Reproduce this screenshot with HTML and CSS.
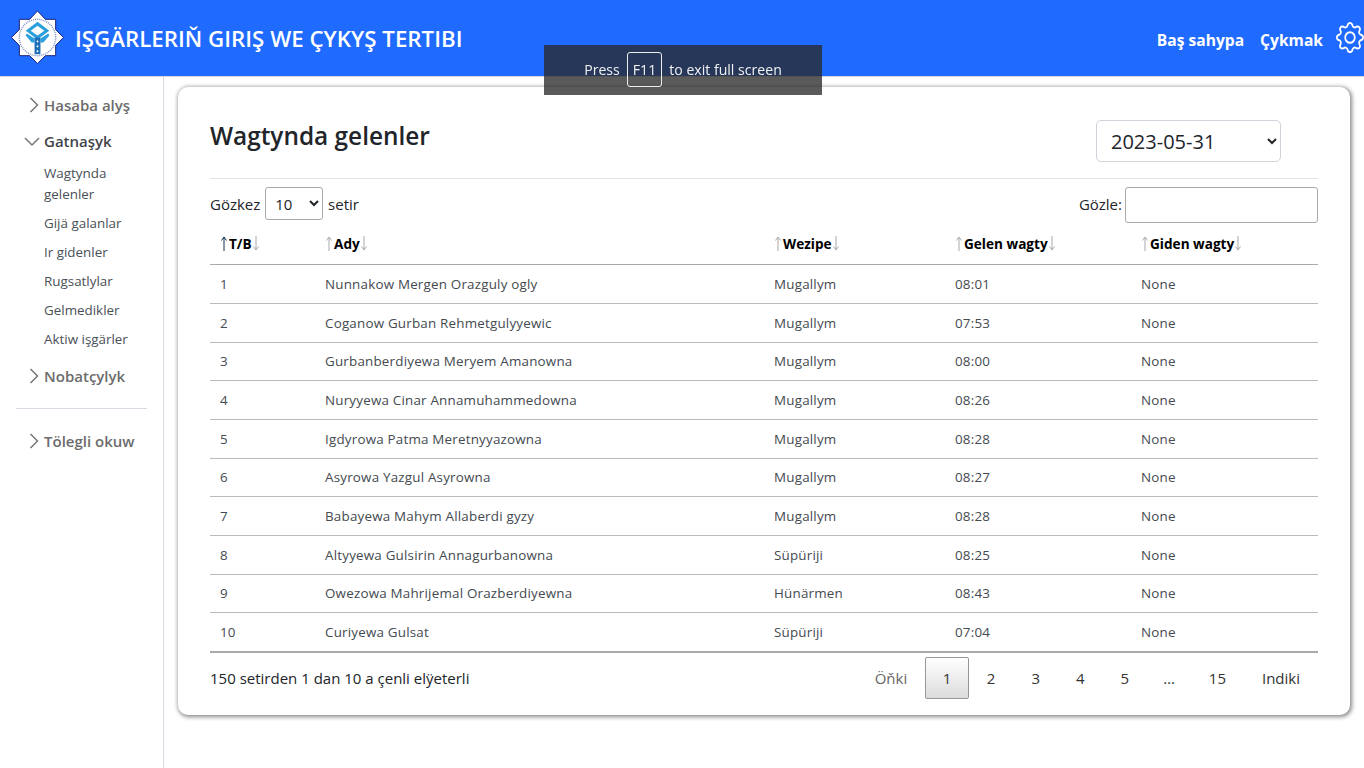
FILE: index.html
```html
<!DOCTYPE html>
<html lang="tk">
<head>
  <meta charset="UTF-8" />
  <title>Wagtynda gelenler</title>
  <link rel="stylesheet" href="styles.css">
</head>
<body>

  <!-- sort arrows used in the table head -->
  <svg class="sprite">
    <symbol id="up" viewBox="0 0 8 15"><path d="M4 15V1M1.500 4.500L4 1l2.500 3.500"/></symbol>
    <symbol id="down" viewBox="0 0 8 15"><path d="M4 0v14M1.500 10.500L4 14l2.500-3.500"/></symbol>
  </svg>

  <!-- TOP BAR -->
  <header class="topbar">
    <a class="brand" href="#">
      <svg class="brand-logo" viewBox="0 0 56 56">
        <path d="M28 1l8 8.500h10.500v10.500l8 8-8 8v10.500h-10.500l-8 8-8-8h-10.500v-10.500l-8-8 8-8v-10.500h10.500z" fill="#fff" stroke="#1b1f7a" stroke-width="1"/>
        <circle cx="28" cy="28" r="18.500" fill="none" stroke="#7f8fc0" stroke-width="1.500" stroke-dasharray="1 1"/>
        <path d="M28 12l12 9-12 9-12-9z" fill="#2a9fdc"/>
        <path d="M28 16l7 5-7 5-7-5z" fill="#fff"/>
        <path d="M17 24l8 5v4h-3l-6-7zM39 24l-8 5v4h3l6-7z" fill="#2a9fdc"/>
        <rect x="25" y="28" width="6" height="17" fill="#1c6fb8"/>
        <path d="M28 31v2M27 32h2M28 36v2M27 37h2M28 41v2M27 42h2" stroke="#fff" stroke-width="1"/>
      </svg>
      <span class="brand-title">IŞGÄRLERIŇ GIRIŞ WE ÇYKYŞ TERTIBI</span>
    </a>
    <nav class="topnav">
      <a href="#">Baş sahypa</a>
      <a href="#">Çykmak</a>
      <svg class="gear" viewBox="0 0 16 16" preserveAspectRatio="none" fill="#fff">
        <path d="M8 4.754a3.246 3.246 0 1 0 0 6.492 3.246 3.246 0 0 0 0-6.492zM5.754 8a2.246 2.246 0 1 1 4.492 0 2.246 2.246 0 0 1-4.492 0z"/>
        <path d="M9.796 1.343c-.527-1.79-3.065-1.79-3.592 0l-.094.319a.873.873 0 0 1-1.255.52l-.292-.16c-1.64-.892-3.433.902-2.54 2.541l.159.292a.873.873 0 0 1-.52 1.255l-.319.094c-1.79.527-1.79 3.065 0 3.592l.319.094a.873.873 0 0 1 .52 1.255l-.16.292c-.892 1.64.901 3.434 2.541 2.54l.292-.159a.873.873 0 0 1 1.255.52l.094.319c.527 1.79 3.065 1.79 3.592 0l.094-.319a.873.873 0 0 1 1.255-.52l.292.16c1.64.893 3.434-.902 2.54-2.541l-.159-.292a.873.873 0 0 1 .52-1.255l.319-.094c1.79-.527 1.79-3.065 0-3.592l-.319-.094a.873.873 0 0 1-.52-1.255l.16-.292c.893-1.64-.902-3.433-2.541-2.54l-.292.159a.873.873 0 0 1-1.255-.52l-.094-.319zm-2.633.283c.246-.835 1.428-.835 1.674 0l.094.319a1.873 1.873 0 0 0 2.693 1.115l.291-.16c.764-.415 1.6.42 1.184 1.185l-.159.292a1.873 1.873 0 0 0 1.116 2.692l.318.094c.835.246.835 1.428 0 1.674l-.319.094a1.873 1.873 0 0 0-1.115 2.693l.16.291c.415.764-.42 1.6-1.185 1.184l-.291-.159a1.873 1.873 0 0 0-2.693 1.116l-.094.318c-.246.835-1.428.835-1.674 0l-.094-.319a1.873 1.873 0 0 0-2.692-1.115l-.292.16c-.764.415-1.6-.42-1.184-1.185l.159-.291A1.873 1.873 0 0 0 1.945 8.93l-.319-.094c-.835-.246-.835-1.428 0-1.674l.319-.094A1.873 1.873 0 0 0 3.06 4.377l-.16-.292c-.415-.764.42-1.6 1.185-1.184l.292.159a1.873 1.873 0 0 0 2.692-1.115l.094-.319z"/>
      </svg>
    </nav>
  </header>

  <!-- Browser full screen hint -->
  <div class="fs-hint">Press <kbd>F11</kbd> to exit full screen</div>

  <div class="layout">

    <!-- SIDEBAR -->
    <aside class="sidebar">
      <a class="side-link" href="#">
        <svg class="chev" viewBox="0 0 16 16"><path d="M2.500 1l7 7-7 7"/></svg>Hasaba alyş
      </a>
      <a class="side-link open" href="#">
        <svg class="chev chev-down" viewBox="0 0 16 16"><path d="M1 5l7 7 7-7"/></svg>Gatnaşyk
      </a>
      <ul class="side-sub">
        <li><a href="#">Wagtynda gelenler</a></li>
        <li><a href="#">Gijä galanlar</a></li>
        <li><a href="#">Ir gidenler</a></li>
        <li><a href="#">Rugsatlylar</a></li>
        <li><a href="#">Gelmedikler</a></li>
        <li><a href="#">Aktiw işgärler</a></li>
      </ul>
      <a class="side-link" href="#">
        <svg class="chev" viewBox="0 0 16 16"><path d="M2.500 1l7 7-7 7"/></svg>Nobatçylyk
      </a>
      <hr class="side-line">
      <a class="side-link" href="#">
        <svg class="chev" viewBox="0 0 16 16"><path d="M2.500 1l7 7-7 7"/></svg>Tölegli okuw
      </a>
    </aside>

    <!-- CONTENT -->
    <main class="content">
      <section class="card">
        <div class="card-head">
          <h2>Wagtynda gelenler</h2>
          <select class="date-select">
            <option>2023-05-31</option>
          </select>
        </div>

        <div class="table-tools">
          <label class="length">Gözkez
            <select class="length-select"><option>10</option></select>
            setir</label>
          <label class="search"><span class="search-label">Gözle:</span><input type="text"></label>
        </div>

        <table class="data">
          <thead>
            <tr>
              <th class="col-id"><svg class="arr on"><use href="#up"/></svg>T/B<svg class="arr"><use href="#down"/></svg></th>
              <th class="col-name"><svg class="arr"><use href="#up"/></svg>Ady<svg class="arr"><use href="#down"/></svg></th>
              <th class="col-job"><svg class="arr"><use href="#up"/></svg>Wezipe<svg class="arr"><use href="#down"/></svg></th>
              <th class="col-in"><svg class="arr"><use href="#up"/></svg>Gelen wagty<svg class="arr"><use href="#down"/></svg></th>
              <th><svg class="arr"><use href="#up"/></svg>Giden wagty<svg class="arr"><use href="#down"/></svg></th>
            </tr>
          </thead>
          <tbody>
            <tr><td>1</td><td>Nunnakow Mergen Orazguly ogly</td><td>Mugallym</td><td>08:01</td><td>None</td></tr>
            <tr><td>2</td><td>Coganow Gurban Rehmetgulyyewic</td><td>Mugallym</td><td>07:53</td><td>None</td></tr>
            <tr><td>3</td><td>Gurbanberdiyewa Meryem Amanowna</td><td>Mugallym</td><td>08:00</td><td>None</td></tr>
            <tr><td>4</td><td>Nuryyewa Cinar Annamuhammedowna</td><td>Mugallym</td><td>08:26</td><td>None</td></tr>
            <tr><td>5</td><td>Igdyrowa Patma Meretnyyazowna</td><td>Mugallym</td><td>08:28</td><td>None</td></tr>
            <tr><td>6</td><td>Asyrowa Yazgul Asyrowna</td><td>Mugallym</td><td>08:27</td><td>None</td></tr>
            <tr><td>7</td><td>Babayewa Mahym Allaberdi gyzy</td><td>Mugallym</td><td>08:28</td><td>None</td></tr>
            <tr><td>8</td><td>Altyyewa Gulsirin Annagurbanowna</td><td>Süpüriji</td><td>08:25</td><td>None</td></tr>
            <tr><td>9</td><td>Owezowa Mahrijemal Orazberdiyewna</td><td>Hünärmen</td><td>08:43</td><td>None</td></tr>
            <tr><td>10</td><td>Curiyewa Gulsat</td><td>Süpüriji</td><td>07:04</td><td>None</td></tr>
          </tbody>
        </table>

        <div class="table-foot">
          <div>150 setirden 1 dan 10 a çenli elÿeterli</div>
          <div class="pager">
            <a class="page off" href="#">Öňki</a>
            <a class="page current" href="#">1</a>
            <a class="page" href="#">2</a>
            <a class="page" href="#">3</a>
            <a class="page" href="#">4</a>
            <a class="page" href="#">5</a>
            <span class="page dots">…</span>
            <a class="page" href="#">15</a>
            <a class="page" href="#">Indiki</a>
          </div>
        </div>
      </section>
    </main>
  </div>

</body>
</html>
```

FILE: styles.css
```css
* {
  box-sizing: border-box;
}

body {
  margin: 0;
  height: 100vh;
  overflow: hidden;
  font-family: "Open Sans", "Noto Sans", sans-serif;
  font-size: 15px;
  color: #212529;
  background: #fff;
}

a {
  color: inherit;
  text-decoration: none;
}

.sprite {
  display: none;
}

/* top bar */
.topbar {
  display: flex;
  justify-content: space-between;
  align-items: center;
  height: 77px;
  padding: 0 0 1px 10px;
  background: #1f6aff;
  border-bottom: 1px solid #d8d8d8;
}

.brand {
  display: flex;
  align-items: center;
  gap: 10px;
  color: #fff;
}

.brand-logo {
  width: 55px;
  height: 55px;
}

.brand-title {
  padding-top: 2px;
  font-size: 22.300px;
  font-weight: 600;
}

.topnav {
  display: flex;
  align-items: center;
  gap: 16px;
  color: #fff;
  font-size: 15.600px;
  font-weight: 700;
}

.topnav a {
  padding-top: 4px;
}

.gear {
  width: 28px;
  height: 31px;
  margin-left: -3px;
}

/* full screen hint */
.fs-hint {
  position: fixed;
  top: 45px;
  left: 544px;
  display: flex;
  align-items: center;
  justify-content: center;
  gap: 7px;
  width: 278px;
  height: 50px;
  padding-bottom: 2px;
  background: rgba(40, 40, 40, 0.77);
  color: #f1f1f1;
  font-size: 14.100px;
}

.fs-hint kbd {
  display: block;
  padding: 7px 5px;
  border: 1px solid #eee;
  border-radius: 3px;
  font: inherit;
}

/* layout */
.layout {
  display: flex;
  height: calc(100vh - 77px);
}

.sidebar {
  flex: 0 0 164px;
  padding: 16px 16px 0;
  border-right: 1px solid #d9d9e3;
}

.side-link {
  display: flex;
  align-items: center;
  height: 24px;
  margin-bottom: 12px;
  padding-left: 12px;
  color: #6c6c6c;
  font-size: 15px;
  font-weight: 600;
}

.side-link.open {
  color: #3f4448;
}

.chev {
  flex: none;
  width: 16px;
  height: 16px;
  fill: none;
  stroke: #777;
  stroke-width: 1.500;
}

.chev-down {
  margin-left: -4px;
  margin-right: 4px;
}

.side-sub {
  list-style: none;
  margin: -2px 0 14px;
  padding: 0 0 0 28px;
  font-size: 13.400px;
  line-height: 21px;
  color: #495057;
}

.side-sub li {
  margin-bottom: 8px;
}

.side-line {
  margin: 20px 0 20px;
  border: 0;
  border-top: 1px solid #d9d9e3;
}

/* content */
.content {
  flex: 1;
  padding: 10px 14px 0;
}

.card {
  height: 628px;
  padding: 32px 32px 0;
  border-radius: 10px;
  box-shadow: 1px 1px 4px 1px #8a8a8a;
  background: #fff;
}

.card-head {
  display: flex;
  justify-content: space-between;
  align-items: flex-start;
  height: 60px;
  border-bottom: 1px solid #e2e2e8;
}

.card-head h2 {
  margin: -1px 0 0;
  font-size: 24.400px;
  font-weight: 600;
  line-height: 36px;
}

.date-select {
  width: 185px;
  height: 42px;
  margin: 1px 37px 0 0;
  padding: 0 10px;
  border: 1px solid #ced4da;
  border-radius: 5px;
  background: #fff;
  color: #212529;
  font-family: inherit;
  font-size: 20px;
}

.table-tools {
  display: flex;
  justify-content: space-between;
  align-items: center;
  height: 36px;
  margin-top: 8px;
}

.length {
  padding-bottom: 3px;
}

.length-select {
  width: 58px;
  height: 33px;
  margin: 0 1px;
  padding: 0 5px;
  border: 1px solid #aaa;
  border-radius: 3px;
  background: #fff;
  color: #212529;
  font-family: inherit;
  font-size: 15px;
}

.search {
  display: flex;
  align-items: center;
  gap: 3px;
}

.search-label {
  padding-bottom: 2px;
}

.search input {
  width: 193px;
  height: 36px;
  border: 1px solid #aaa;
  border-radius: 3px;
}

/* table */
.data {
  width: 100%;
  margin-top: 5px;
  border-collapse: collapse;
  table-layout: fixed;
  font-size: 13.400px;
  letter-spacing: 0.200px;
}

.data th {
  height: 36.800px;
  padding: 0 10px 6px;
  text-align: left;
  color: #000;
  font-size: 13.600px;
  font-weight: 700;
  letter-spacing: 0;
  border-bottom: 1px solid #aaa;
}

.data td {
  height: 38.670px;
  padding: 0 10px;
  color: #444a50;
  border-bottom: 1px solid #bbb;
}

.data tbody tr:last-child td {
  height: 39.700px;
  border-bottom: 2px solid #aaa;
}

.col-id { width: 105px; }
.col-name { width: 449px; }
.col-job { width: 181px; }
.col-in { width: 186px; }

.arr {
  width: 8px;
  height: 15px;
  margin-right: 1px;
  vertical-align: -2px;
  fill: none;
  stroke: #a9a9a9;
  stroke-width: 1;
}

.arr.on {
  stroke: #10304a;
}

/* footer */
.table-foot {
  display: flex;
  justify-content: space-between;
  align-items: center;
  height: 50px;
}

.pager {
  display: flex;
  align-items: center;
}

.page {
  display: block;
  height: 42px;
  padding: 0 17px;
  line-height: 40px;
  color: #333;
  border: 1px solid transparent;
  border-radius: 2px;
}

.page.off {
  color: #666;
}

.page.dots {
  padding: 0 15px;
}

.page.current {
  padding: 0 16.500px;
  border-color: #979797;
  background: linear-gradient(#fff, #dcdcdc);
}
```
